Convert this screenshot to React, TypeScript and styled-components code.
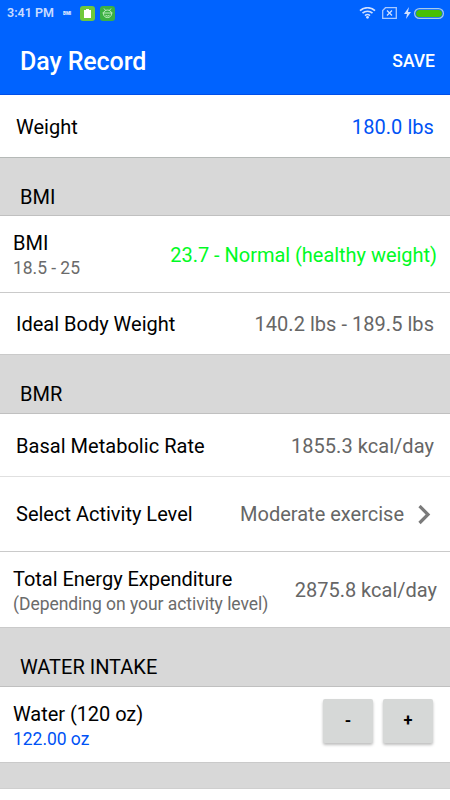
import React from "react";
import styled, { createGlobalStyle } from "styled-components";

const GlobalStyle = createGlobalStyle`
  * { box-sizing: border-box; }
  body { margin: 0; background: #fff; font-family: Roboto, sans-serif; }
`;

const Screen = styled.main`
  width: 450px;
  height: 800px;
  overflow: hidden;
  background: #fff;
  color: #000;
`;

const Header = styled.header`
  height: 95px;
  background: #0063ff;
  border-bottom: 1px solid #004fe8;
  color: #fff;
`;

const StatusBar = styled.div`
  display: flex;
  justify-content: space-between;
  height: 26px;
  padding: 0 6px 0 7px;
  color: #c9dcff;
`;

const StatusGroup = styled.div`
  display: flex;
  align-items: center;
`;

const Clock = styled.span`
  width: 56px;
  font-size: 12.5px;
  font-weight: 600;
  line-height: 26px;
  white-space: nowrap;
`;

const TinyLabel = styled.span`
  width: 17px;
  font-size: 4.5px;
  font-weight: 900;
  color: #e4eeff;
`;

const AppBadge = styled.span<{ $color: string }>`
  display: flex;
  width: 15px;
  height: 15px;
  margin-right: 5px;
  border-radius: 3px;
  background: ${(p) => p.$color};
`;

const Icon = styled.svg<{ $gap?: number }>`
  display: block;
  flex: none;
  margin-right: ${(p) => p.$gap ?? 0}px;
`;

const TitleBar = styled.div`
  display: flex;
  align-items: center;
  justify-content: space-between;
  height: 68px;
  padding: 2px 15px 0 20px;
`;

const Title = styled.h1`
  margin: 0;
  padding-top: 2px;
  font-size: 25px;
  font-weight: 500;
  letter-spacing: -0.1px;
  line-height: 32px;
`;

const SaveButton = styled.button`
  padding: 0;
  border: 0;
  background: none;
  color: #fff;
  font: 500 17.5px/24px Roboto, sans-serif;
`;

const SectionHeader = styled.h2<{ $height?: number }>`
  display: flex;
  align-items: flex-end;
  height: ${(p) => p.$height ?? 59}px;
  margin: 0;
  padding: 0 20px ${(p) => (p.$height ? 6 : 7)}px;
  border-bottom: 1px solid #c0c0c0;
  background: #d8d8d8;
  font-size: 20px;
  font-weight: 400;
  line-height: 24px;
`;

const Row = styled.section<{
  $height: number;
  $inset?: number;
  $top?: number;
  $line?: string;
}>`
  display: flex;
  align-items: center;
  justify-content: space-between;
  height: ${(p) => p.$height}px;
  padding: ${(p) => p.$top ?? 1}px ${(p) => p.$inset ?? 16}px 0;
  border-bottom: 1px solid ${(p) => p.$line ?? "#cacaca"};
  background: #fff;
`;

const Label = styled.div<{ $tracking?: number }>`
  font-size: 20px;
  line-height: 25px;
  letter-spacing: ${(p) => p.$tracking ?? 0}px;
  white-space: nowrap;
`;

const Stack = styled.div<{ $top?: number }>`
  padding-top: ${(p) => p.$top ?? 0}px;
`;

const Detail = styled.div<{ $color?: string }>`
  margin-bottom: 2px;
  color: ${(p) => p.$color ?? "#6b6b6b"};
  font-size: 17.5px;
  line-height: 24px;
  letter-spacing: -0.04px;
  white-space: nowrap;
`;

const Value = styled(Label)<{ $color?: string }>`
  color: ${(p) => p.$color ?? "#666"};
`;

const Choice = styled.div`
  display: flex;
  align-items: center;
  gap: 14px;
`;

const Stepper = styled.div`
  display: flex;
  align-self: flex-start;
  gap: 10px;
  padding: 9px 4px 0 0;
`;

const StepButton = styled.button`
  width: 50px;
  height: 44px;
  padding: 0;
  border: 0;
  border-radius: 2px;
  background: #d6d8d7;
  box-shadow: 0 2px 3px rgba(0, 0, 0, 0.26);
  color: #000;
  font: 700 16.5px/44px Roboto, sans-serif;
`;

const Footer = styled.footer`
  height: 26px;
  border-bottom: 1px solid #cfcfcf;
  background: #d8d8d8;
`;

export default function App() {
  return (
    <Screen>
      <GlobalStyle />
      <Header>
        <StatusBar>
          <StatusGroup>
            <Clock>3:41 PM</Clock>
            <TinyLabel>BMI</TinyLabel>
            <AppBadge $color="#6fc83a">
              <Icon width="15" height="15" viewBox="0 0 15 15">
                <path d="M4 4h2V3h3v1h2v8H4z" fill="#fff" />
              </Icon>
            </AppBadge>
            <AppBadge $color="#3cb043">
              <Icon width="15" height="15" viewBox="0 0 15 15" fill="none" stroke="#c9f2c9" strokeWidth="0.9">
                <path d="M4 2.500l1.500 1.800M11 2.500L9.500 4.300M3.500 7.800c0-5 8-5 8 0s-8 5-8 0zM2.500 7h10M5.500 9.300q2 1.500 4 0" />
              </Icon>
            </AppBadge>
          </StatusGroup>
          <StatusGroup>
            <Icon width="17" height="13" viewBox="0 0 17 13" fill="none" stroke="#d0e0ff" strokeWidth="1.6" $gap={6}>
              <path d="M1 3.700c4.200-4 10.800-4 15 0M3.500 6.200c2.800-2.700 7.200-2.700 10 0M6 8.600c1.500-1.300 3.500-1.300 5 0" />
              <circle cx="8.500" cy="10.300" r="1.400" fill="#d0e0ff" stroke="none" />
            </Icon>
            <Icon width="15" height="12" viewBox="0 0 15 12" fill="none" stroke="#a9c9ff" strokeWidth="1.300" $gap={7}>
              <path d="M3.500.7H14.300v10.600H.7V3.500z" />
              <path d="M5 3.500l5 5M10 3.500l-5 5" stroke="#d0e0ff" />
            </Icon>
            <Icon width="7" height="12" viewBox="0 0 7 12" $gap={3}>
              <path d="M5 0L0 7h3l-1 5 5-7H4z" fill="#d0e0ff" />
            </Icon>
            <Icon width="30" height="11" viewBox="0 0 30 11">
              <rect x=".6" y=".6" width="28.800" height="9.800" rx="4.900" fill="#0063ff" stroke="#a9cbe8" strokeWidth="1.200" />
              <rect x="2" y="2" width="26" height="7" rx="3.500" fill="#48bf05" />
            </Icon>
          </StatusGroup>
        </StatusBar>
        <TitleBar>
          <Title>Day Record</Title>
          <SaveButton>SAVE</SaveButton>
        </TitleBar>
      </Header>

      <Row $height={63} $top={3} $line="#b5b9b7">
        <Label>Weight</Label>
        <Value $color="#0052f5" $tracking={0.06}>180.0 lbs</Value>
      </Row>

      <SectionHeader $height={58}>BMI</SectionHeader>
      <Row $height={77} $inset={13} $top={2}>
        <Stack $top={2}>
          <Label>BMI</Label>
          <Detail>18.5 - 25</Detail>
        </Stack>
        <Value $color="#00fa25" $tracking={-0.03}>23.7 - Normal (healthy weight)</Value>
      </Row>
      <Row $height={62}>
        <Label>Ideal Body Weight</Label>
        <Value $tracking={0.04}>140.2 lbs - 189.5 lbs</Value>
      </Row>

      <SectionHeader>BMR</SectionHeader>
      <Row $height={63} $top={2} $line="#e0e0e0">
        <Label $tracking={0.03}>Basal Metabolic Rate</Label>
        <Value $tracking={0.05}>1855.3 kcal/day</Value>
      </Row>
      <Row $height={75}>
        <Label>Select Activity Level</Label>
        <Choice>
          <Value>Moderate exercise</Value>
          <Icon width="13" height="20" viewBox="0 0 13 20" $gap={3}>
            <path d="M1.500 1L10 9.500 1.500 18" fill="none" stroke="#7b7b7b" strokeWidth="3.200" />
          </Icon>
        </Choice>
      </Row>
      <Row $height={76} $inset={13}>
        <Stack $top={4}>
          <Label $tracking={-0.03}>Total Energy Expenditure</Label>
          <Detail>(Depending on your activity level)</Detail>
        </Stack>
        <Value>2875.8 kcal/day</Value>
      </Row>

      <SectionHeader>WATER INTAKE</SectionHeader>
      <Row $height={76} $inset={13} $top={3}>
        <Stack $top={2}>
          <Label $tracking={-0.05}>Water (120 oz)</Label>
          <Detail $color="#0052f5">122.00 oz</Detail>
        </Stack>
        <Stepper>
          <StepButton>-</StepButton>
          <StepButton>+</StepButton>
        </Stepper>
      </Row>
      <Footer />
    </Screen>
  );
}
